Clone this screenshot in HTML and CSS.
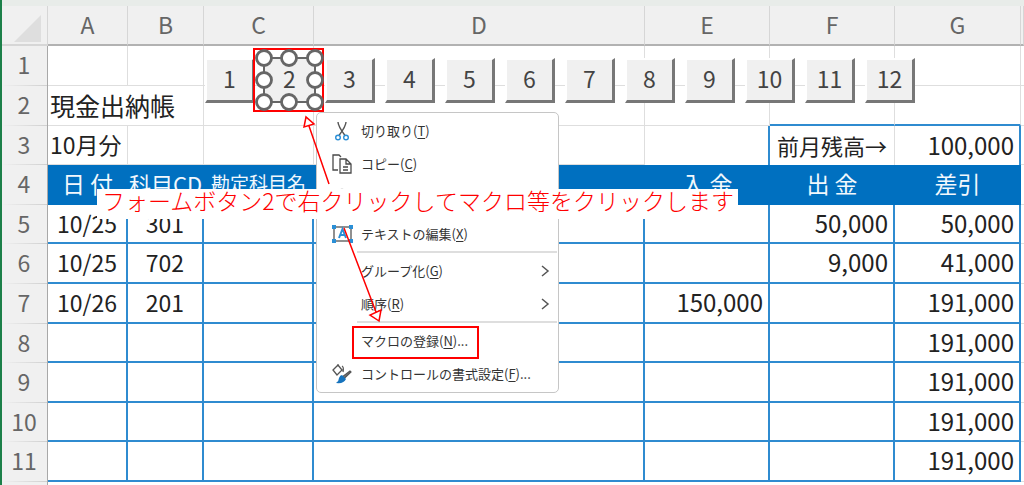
FILE: index.html
```html
<!DOCTYPE html>
<html lang="ja">
<head>
<meta charset="utf-8">
<title>現金出納帳</title>
<link rel="stylesheet" href="styles.css">
</head>
<body>
<main class="sheet">
  <table class="grid">
    <colgroup>
      <col class="w-head"><col class="w-a"><col class="w-b"><col class="w-c"><col>
      <col class="w-e"><col class="w-e"><col class="w-g"><col class="w-rest">
    </colgroup>
    <thead>
      <tr>
        <th class="corner"><svg width="27" height="27" viewBox="0 0 27 27" aria-hidden="true"><path d="M27 0V27H0Z" fill="#dedede"/></svg></th>
        <th>A</th><th>B</th><th>C</th><th>D</th><th>E</th><th>F</th><th>G</th><th></th>
      </tr>
    </thead>
    <tbody>
      <tr><th>1</th><td></td><td></td><td></td><td></td><td></td><td></td><td></td><td></td></tr>
      <tr><th>2</th><td class="title" colspan="2">現金出納帳</td><td></td><td></td><td></td><td class="over"></td><td class="over"></td><td></td></tr>
      <tr><th>3</th><td class="month">10月分</td><td></td><td></td><td></td><td class="before"></td><td class="carry">前月残高→</td><td class="num edge">100,000</td><td></td></tr>
      <tr class="band"><th>4</th><td>日&nbsp;付</td><td class="code">科目CD</td><td class="account">勘定科目名</td><td></td><td>入&nbsp;金</td><td>出&nbsp;金</td><td>差引</td><td class="out"></td></tr>
      <tr class="entry"><th>5</th><td>10/25</td><td>301</td><td></td><td></td><td class="num"></td><td class="num">50,000</td><td class="num">50,000</td><td class="out"></td></tr>
      <tr class="entry"><th>6</th><td>10/25</td><td>702</td><td></td><td></td><td class="num"></td><td class="num">9,000</td><td class="num">41,000</td><td class="out"></td></tr>
      <tr class="entry"><th>7</th><td>10/26</td><td>201</td><td></td><td></td><td class="num">150,000</td><td class="num"></td><td class="num">191,000</td><td class="out"></td></tr>
      <tr class="entry"><th>8</th><td></td><td></td><td></td><td></td><td></td><td></td><td class="num">191,000</td><td class="out"></td></tr>
      <tr class="entry"><th>9</th><td></td><td></td><td></td><td></td><td></td><td></td><td class="num">191,000</td><td class="out"></td></tr>
      <tr class="entry"><th>10</th><td></td><td></td><td></td><td></td><td></td><td></td><td class="num">191,000</td><td class="out"></td></tr>
      <tr class="entry"><th>11</th><td></td><td></td><td></td><td></td><td></td><td></td><td class="num">191,000</td><td class="out"></td></tr>
    </tbody>
  </table>

  <div class="months">
    <button type="button">1</button>
    <button type="button" class="selected">2</button>
    <button type="button">3</button>
    <button type="button">4</button>
    <button type="button">5</button>
    <button type="button">6</button>
    <button type="button">7</button>
    <button type="button">8</button>
    <button type="button">9</button>
    <button type="button">10</button>
    <button type="button">11</button>
    <button type="button">12</button>
  </div>

  <div class="menu" role="menu">
    <button type="button" role="menuitem"><svg class="icon" viewBox="0 0 22 22" aria-hidden="true"><g fill="none" stroke-width="1.4"><path d="M7 2Q7 6 14 15.500M15 2Q15 6 8 15.500" stroke="#555"/><circle cx="7" cy="17.500" r="2.300" stroke="#2b8fd6"/><circle cx="15" cy="17.500" r="2.300" stroke="#2b8fd6"/></g></svg><span>切り取り(<u>T</u>)</span></button>
    <button type="button" role="menuitem"><svg class="icon" viewBox="0 0 22 22" aria-hidden="true"><g fill="none" stroke="#4a4a4a" stroke-width="1.300"><path d="M7 17H2V2H8L10 4"/><path d="M9 6H15L20 11V20H9ZM15 6V11H20M12 14H17M12 17H17"/></g></svg><span>コピー(<u>C</u>)</span></button>
    <div class="paste"><svg class="icon" viewBox="0 0 22 22" aria-hidden="true"><path d="M8 5Q8 1.500 11 1.500Q14 1.500 14 5M8 4H4V20H18V4H14" fill="none" stroke="#777" stroke-width="1.300"/></svg></div>
    <button type="button" role="menuitem"><svg class="icon" viewBox="0 0 22 22" aria-hidden="true"><rect x="3" y="4" width="17" height="14" fill="none" stroke="#555" stroke-width="1.300"/><path d="M8 15L11.500 6L15 15M9.500 12H13.500" fill="none" stroke="#2b8fd6" stroke-width="2"/><path d="M1 2H5V6H1ZM18 2H22V6H18ZM1 16H5V20H1ZM18 16H22V20H18Z" fill="#2b8fd6"/></svg><span>テキストの編集(<u>X</u>)</span></button>
    <hr>
    <button type="button" role="menuitem"><i class="icon"></i><span>グループ化(<u>G</u>)</span><svg class="chevron" viewBox="0 0 10 12" aria-hidden="true"><path d="M2 1L8 6L2 11" fill="none" stroke="#555" stroke-width="1.500"/></svg></button>
    <button type="button" role="menuitem"><i class="icon"></i><span>順序(<u>R</u>)</span><svg class="chevron" viewBox="0 0 10 12" aria-hidden="true"><path d="M2 1L8 6L2 11" fill="none" stroke="#555" stroke-width="1.500"/></svg></button>
    <hr>
    <button type="button" role="menuitem"><i class="icon"></i><span>マクロの登録(<u>N</u>)...</span></button>
    <button type="button" role="menuitem"><svg class="icon" viewBox="0 0 22 22" aria-hidden="true"><path d="M2 7L7 2L11 7L6 12ZM7 2V1M11 3Q13 4 12 9" fill="none" stroke="#555" stroke-width="1.300"/><path d="M19 8L11 14L12.500 16L20 9Z" fill="#777" stroke="#555" stroke-width="1.200"/><path d="M11 12L15 16Q13 21 5 20Q8 18 8 15Q9 12 11 12Z" fill="#1673bd"/></svg><span>コントロールの書式設定(<u>F</u>)...</span></button>
  </div>

  <div class="frame frame-button"></div>
  <div class="frame frame-macro"></div>
  <svg class="marks" width="420" height="340" viewBox="0 0 420 340" aria-hidden="true">
    <g fill="none" stroke="#666" stroke-width="2">
      <rect x="264" y="58" width="51" height="44"/>
      <g fill="#fff" stroke-width="2.800">
        <circle cx="264" cy="58" r="7.500"/><circle cx="289" cy="58" r="7.500"/><circle cx="315" cy="58" r="7.500"/>
        <circle cx="264" cy="80" r="7.500"/><circle cx="315" cy="80" r="7.500"/>
        <circle cx="264" cy="102" r="7.500"/><circle cx="289" cy="102" r="7.500"/><circle cx="315" cy="102" r="7.500"/>
      </g>
    </g>
    <g fill="#fff" stroke="#f00" stroke-width="1.500">
      <path d="M329 184L309 126M306 117L304 127L314 124Z"/>
      <path d="M344 228L376 312M379 321L370 315L381 310Z"/>
    </g>
  </svg>
  <p class="note">フォームボタン2で右クリックしてマクロ等をクリックします</p>
</main>
</body>
</html>
```
FILE: styles.css
```css
* { box-sizing: border-box; }

body {
  margin: 0;
  background: #fff;
  color: #222;
  font-family: "Noto Sans CJK JP", sans-serif;
  overflow: hidden;
}

.sheet {
  position: relative;
  min-height: 100vh;
  padding-top: 6px;
  border-left: 2px solid #1c8049;
  background: linear-gradient(#e8ece9 0 6px, transparent 6px),
    linear-gradient(90deg, #f0f0f0 45px, #a8a8a8 45px 46px, #fff 46px);
}

/* worksheet */
.grid {
  width: 100%;
  table-layout: fixed;
  border-collapse: separate;
  border-spacing: 0;
  font-size: 23px;
  line-height: 30px;
}

.w-head { width: 46px; }
.w-a { width: 80px; }
.w-b { width: 76px; }
.w-c { width: 110px; }
.w-e { width: 125px; }
.w-g { width: 126px; }
.w-rest { width: 3px; }

.grid th {
  padding: 0 0 2px;
  background: #f0f0f0;
  color: #666;
  font-weight: 400;
}

.grid thead th {
  height: 40px;
  border-right: 1px solid #d6d6d6;
  border-bottom: 2px solid #b2b2b2;
}

.grid thead .corner {
  padding: 6px 6px 0 0;
  text-align: right;
  line-height: 0;
  border-bottom-color: #d6d6d6;
}

.grid tbody th {
  background: linear-gradient(90deg, #f0f0f0, #d0d0d0) bottom / 100% 1px no-repeat, #f0f0f0;
  border-right: 1px solid #a8a8a8;
  padding: 0 1px 4px 0;
}

.grid td {
  height: 40px;
  padding: 0 0 2px;
  border-right: 1px solid #dedede;
  border-bottom: 1px solid #dedede;
  text-align: center;
  white-space: nowrap;
}

.grid tbody tr:nth-child(5n) td,
.grid tbody tr:nth-child(5n+3) td { height: 39px; }

.grid td:last-child { border-right: 0; }

.grid .title {
  padding-left: 2px;
  text-align: left;
  font-size: 25px;
}

.grid .month {
  padding-left: 2px;
  text-align: left;
}

.grid .over { border-bottom: 2px solid #2f8bd0; }
.grid .before { border-right: 2px solid #2f8bd0; }
.grid .carry { font-size: 22px; }
.grid .before,
.grid .carry,
.grid .edge { border-bottom: 0; }

.grid .num {
  padding-right: 5px;
  text-align: right;
  font-size: 24px;
}

.grid .edge { border-right: 2px solid #2f8bd0; }

.grid .band td:not(.out) {
  padding-bottom: 4px;
  background: #0070c0;
  border-color: #0070c0;
  color: #f2f8fd;
}

.grid .band .code { font-size: 22px; }
.grid .band .account { font-size: 19px; }

.grid .entry td:not(.out) {
  border-right: 2px solid #2f8bd0;
  border-bottom: 2px solid #2f8bd0;
}

/* form buttons on the sheet */
.months {
  position: absolute;
  top: 58px;
  left: 203px;
  display: flex;
  gap: 10px;
}

.months button {
  width: 50px;
  height: 45px;
  padding: 0 0 5px;
  border: solid;
  border-width: 2px 3px 3px 2px;
  border-color: #fff #777 #777 #fff;
  background: #f0f0f0;
  color: #444;
  font: 400 23px/30px "Noto Sans CJK JP", sans-serif;
}

.months .selected { border-color: #f0f0f0; }

/* context menu */
.menu {
  position: absolute;
  top: 112px;
  left: 314px;
  width: 243px;
  padding: 1px 1px 2px;
  border: 1px solid #c6c6c6;
  border-radius: 5px;
  background: #fff;
}

.menu button,
.paste {
  display: flex;
  align-items: center;
  gap: 8px;
  width: 100%;
  height: 33px;
  padding: 0 7px 0 13px;
  border: 0;
  background: none;
  color: #333;
  font: 13px/20px "Noto Sans CJK JP", sans-serif;
  text-align: left;
}

.paste { height: 37px; }

.menu u { text-underline-offset: 2px; }

.menu .icon {
  flex: none;
  width: 22px;
  height: 22px;
}

.menu .chevron {
  width: 10px;
  height: 12px;
  margin-left: auto;
}

.menu hr {
  height: 2px;
  margin: 1px 0 1px 39px;
  border: 0;
  background: #dedede;
}

/* annotations */
.frame {
  position: absolute;
  border: 2px solid #f00;
}

.frame-button {
  top: 48px;
  left: 251px;
  width: 71px;
  height: 64px;
}

.frame-macro {
  top: 326px;
  left: 350px;
  width: 127px;
  height: 33px;
}

.marks {
  position: absolute;
  top: 0;
  left: -2px;
}

.note {
  position: absolute;
  top: 189px;
  left: 95px;
  margin: 0;
  padding: 0 4px 8px 5px;
  background: #fff;
  color: #f00;
  font-size: 23px;
  font-weight: 300;
  line-height: 22px;
  white-space: nowrap;
}
```
